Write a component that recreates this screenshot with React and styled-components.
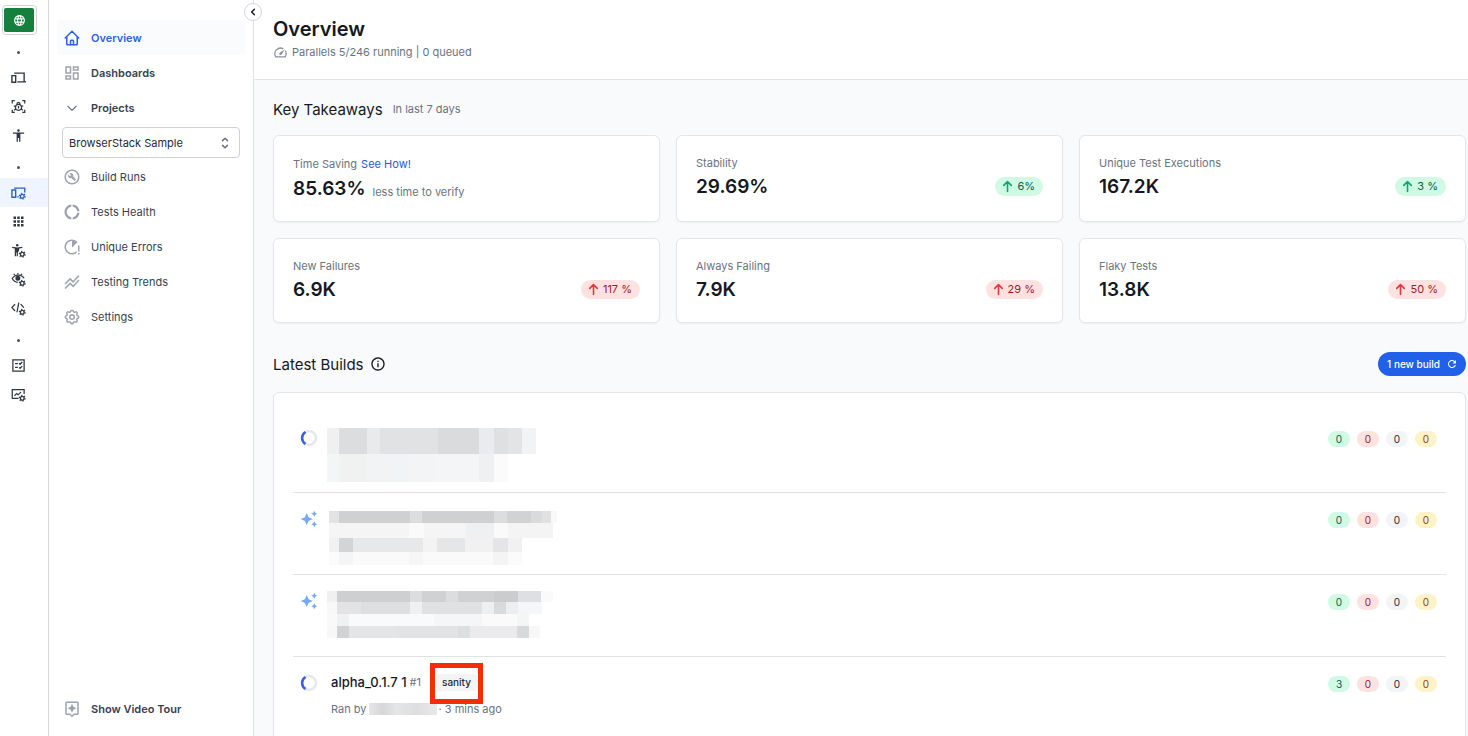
import React from "react";
import styled, { createGlobalStyle, css } from "styled-components";
import {
    MdAccessibility,
    MdApps,
    MdAutoAwesome,
    MdDonutLarge,
    MdInfoOutline,
    MdLanguage,
    MdOutlineAssistant,
    MdOutlineBuildCircle,
    MdOutlineDashboard,
    MdOutlineSpeed,
    MdRefresh,
    MdRunningWithErrors,
    MdStackedLineChart,
} from "react-icons/md";
import {
    HiChevronLeft,
    HiOutlineArrowUp,
    HiOutlineChevronDown,
    HiOutlineCog,
    HiOutlineHome,
    HiSelector,
} from "react-icons/hi";

const Gear = () => (
    <g fill="none" stroke="currentColor">
        <circle cx="18" cy="18" r="3" strokeWidth="2.2" />
        <circle cx="18" cy="18" r="4.7" strokeWidth="1.8" strokeDasharray="2 2.92" />
    </g>
);

const DevicesIcon = () => (
    <svg viewBox="0 0 24 24" fill="none" stroke="currentColor" strokeWidth="2.2">
        <path d="M5 5h16v13M10 19h14" />
        <path d="M1.500 9h6v10.500h-6z" />
    </svg>
);

const DevicesGearIcon = () => (
    <svg viewBox="0 0 24 24" fill="none" stroke="currentColor" strokeWidth="2.2">
        <path d="M5 5h17v7M10 19h2.500" />
        <path d="M1.500 8h6v11.500h-6z" />
        <Gear />
    </svg>
);

const ScanIcon = () => (
    <svg viewBox="0 0 24 24" fill="none" stroke="currentColor" strokeWidth="2">
        <path d="M2 7V2.500h4M18 2.500h4V7M22 17v4.500h-4M6 21.500H2V17" />
        <path d="M9.500 8.500c0-4 5-4 5 0M12 8.500c-6 0-7 9.500 0 9.500s6-9.500 0-9.500M12 11v4M4.500 11l3 1M19.500 11l-3 1M5 18l2.500-2M19 18l-2.500-2" />
    </svg>
);

const AccessGearIcon = () => (
    <svg viewBox="0 0 24 24" fill="currentColor">
        <circle cx="10" cy="3.500" r="2" />
        <path d="M2 6l8 1 8-1 .3 2-5.300.800V12l-2 3v6H9v-6H8v6H6V8.800L1.700 8z" />
        <Gear />
    </svg>
);

const EyeGearIcon = () => (
    <svg viewBox="0 0 24 24" fill="none" stroke="currentColor" strokeWidth="2">
        <path d="M21 10C17 3 6 3 2 10.500 4 14.500 7 16.500 11 16.500" />
        <circle cx="11" cy="10" r="3" fill="currentColor" />
        <path d="M6 5L4.500 3M11 4V1.500M16 5l1.500-2" />
        <Gear />
    </svg>
);

const CodeGearIcon = () => (
    <svg viewBox="0 0 24 24" fill="none" stroke="currentColor" strokeWidth="2">
        <path d="M6.500 5L1.500 10.500l5 5.500M15.500 5l5 5.500M12.500 2.500L9.500 18" />
        <Gear />
    </svg>
);

const ChecklistIcon = () => (
    <svg viewBox="0 0 24 24" fill="none" stroke="currentColor" strokeWidth="2">
        <path d="M3 3h18v18H3z" />
        <path d="M6.500 9H11M6.500 15H11M13 8.500l1.500 1.500L18 6.500M13 15l1.500 1.500L18 13" />
    </svg>
);

const ReportGearIcon = () => (
    <svg viewBox="0 0 24 24" fill="none" stroke="currentColor" strokeWidth="2">
        <path d="M12 18H2V4h19v7" />
        <path d="M5.500 14L9 10.500l2.500 2 4.500-4.500" strokeWidth="1.800" />
        <Gear />
    </svg>
);

const railGroups = [
    [
        { label: "Live", Icon: DevicesIcon },
        { label: "Bug Capture", Icon: ScanIcon },
        { label: "Accessibility", Icon: MdAccessibility },
    ],
    [
        { label: "Test Observability", Icon: DevicesGearIcon, active: true },
        { label: "All Products", Icon: MdApps },
        { label: "Accessibility Automation", Icon: AccessGearIcon },
        { label: "Visual Testing", Icon: EyeGearIcon },
        { label: "Code Automation", Icon: CodeGearIcon },
    ],
    [
        { label: "Test Management", Icon: ChecklistIcon },
        { label: "Reporting", Icon: ReportGearIcon },
    ],
];

const projectLinks = [
    { label: "Build Runs", Icon: MdOutlineBuildCircle },
    { label: "Tests Health", Icon: MdDonutLarge },
    { label: "Unique Errors", Icon: MdRunningWithErrors },
    { label: "Testing Trends", Icon: MdStackedLineChart },
    { label: "Settings", Icon: HiOutlineCog },
];

const takeaways = [
    { label: "Time Saving", link: "See How!", value: "85.63%", note: "less time to verify" },
    { label: "Stability", value: "29.69%", change: "6%", tone: "green" },
    { label: "Unique Test Executions", value: "167.2K", change: "3 %", tone: "green" },
    { label: "New Failures", value: "6.9K", change: "117 %", tone: "red" },
    { label: "Always Failing", value: "7.9K", change: "29 %", tone: "red" },
    { label: "Flaky Tests", value: "13.8K", change: "50 %", tone: "red" },
];

// each line is [height, [[cell width, shade], ...]]
const mosaics = [
    [
        [26, [[12, "#f0f0f1"], [28, "#dcdddf"], [13, "#e9eaeb"], [58, "#e1e2e3"], [41, "#dadbdd"], [15, "#eaebee"], [14, "#dfe0e1"], [14, "#e3e4e5"], [14, "#f2f3f4"]]],
        [28, [[12, "#f3f6f6"], [28, "#f0f2f2"], [26, "#f2f3f4"], [16, "#f1f4f6"], [25, "#f3f4f5"], [45, "#f3f5f7"], [15, "#eef0f1"], [14, "#fbfbfb"]]],
    ],
    [
        [12, [[10, "#e3e3e4"], [71, "#cfd0d2"], [12, "#dcdddf"], [72, "#cfd0d2"], [13, "#dcdddf"], [24, "#d1d2d4"], [11, "#d9dadb"], [9, "#e0e1e3"], [6, "#f9f9f9"]]],
        [15, [[80, "#f5f5f6"], [15, "#fafafa"], [42, "#f5f5f6"], [28, "#eff0f1"], [14, "#fafafa"], [45, "#f4f4f5"]]],
        [14, [[10, "#f1f1f2"], [14, "#d3d4d6"], [70, "#e7e8e9"], [14, "#f3f3f4"], [28, "#e5e6e8"], [28, "#f1f1f2"], [15, "#e5e5e7"], [14, "#f0f1f2"]]],
        [13, [[10, "#fbfbfb"], [14, "#f3f5f6"], [56, "#fafafa"], [14, "#f6f6f7"], [70, "#fafafa"], [15, "#f4f4f5"], [14, "#fbfbfb"]]],
    ],
    [
        [11, [[10, "#f0f0f1"], [73, "#cecfd1"], [12, "#dcdddf"], [24, "#d0d1d3"], [12, "#dcddde"], [36, "#d0d1d3"], [24, "#cbcccd"], [23, "#dedfe2"], [12, "#fafafa"]]],
        [12, [[10, "#f8f8f8"], [24, "#e3e3e5"], [49, "#dedfe1"], [12, "#eff0f2"], [60, "#e0e1e3"], [12, "#edeff1"], [12, "#d9dadc"], [12, "#eceef0"], [24, "#f5f6f7"]]],
        [12, [[10, "#f9f9f9"], [12, "#f0f1f2"], [85, "#f9fafb"], [48, "#f5f6f8"], [35, "#fafafa"], [12, "#f4f5f5"]]],
        [12, [[10, "#f8f8f8"], [12, "#d1d2d4"], [48, "#e4e5e6"], [61, "#e2e3e4"], [12, "#dddedf"], [47, "#ebebed"], [12, "#d8d9db"], [11, "#f7f7f7"]]],
    ],
];

const builds = [
    { status: "running", mosaic: mosaics[0], inset: 0, results: [0, 0, 0, 0] },
    { status: "analysed", mosaic: mosaics[1], inset: 2, results: [0, 0, 0, 0] },
    { status: "analysed", mosaic: mosaics[2], inset: 0, results: [0, 0, 0, 0] },
    { status: "running", name: "alpha_0.1.7 1", number: "#1", tag: "sanity", results: [3, 0, 0, 0] },
];

const resultTones = ["green", "red", "gray", "amber"];

const Takeaway = ({ item }) => (
    <Card>
        <CardLabel $tall={Boolean(item.link)}>
            {item.label}
            {item.link && <a href="#time-saving">{item.link}</a>}
        </CardLabel>
        <CardRow>
            <CardValue>{item.value}</CardValue>
            {item.note && <CardNote>{item.note}</CardNote>}
            {item.change && (
                <Change $tone={item.tone}>
                    <HiOutlineArrowUp />
                    {item.change}
                </Change>
            )}
        </CardRow>
    </Card>
);

const Mosaic = ({ lines, inset }) => (
    <MosaicBox $inset={inset}>
        {lines.map(([height, cells], i) => (
            <MosaicLine key={i} $height={height}>
                {cells.map(([width, shade], j) => (
                    <span key={j} style={{ width, backgroundColor: shade }} />
                ))}
            </MosaicLine>
        ))}
    </MosaicBox>
);

const Build = ({ build }) => (
    <BuildRow>
        <Status>
            {build.status === "running" ? (
                <svg viewBox="0 0 18 18" fill="none" strokeWidth="2.500">
                    <circle cx="9" cy="9" r="7" stroke="#e5e7eb" />
                    <path d="M5.500 3A7 7 0 0 0 5.500 15" stroke="#3b5fe0" />
                </svg>
            ) : (
                <MdAutoAwesome />
            )}
        </Status>
        {build.mosaic ? (
            <Mosaic lines={build.mosaic} inset={build.inset} />
        ) : (
            <BuildInfo>
                <BuildTitle>
                    <a href="#build">{build.name}</a>
                    <small>{build.number}</small>
                    <Tag>{build.tag}</Tag>
                </BuildTitle>
                <BuildMeta>
                    Ran by <Smudge /> · 3 mins ago
                </BuildMeta>
            </BuildInfo>
        )}
        <Results>
            {build.results.map((count, i) => (
                <Result key={resultTones[i]} $tone={resultTones[i]}>{count}</Result>
            ))}
        </Results>
    </BuildRow>
);

const App = () => {
    return (
        <Page>
            <GlobalStyle />
            <Rail>
                <Logo href="#home" aria-label="Home">
                    <span><MdLanguage /></span>
                </Logo>
                {railGroups.map((group, i) => (
                    <React.Fragment key={i}>
                        <Dot />
                        {group.map(({ label, Icon, active }) => (
                            <RailLink key={label} href="#product" aria-label={label} $active={active}>
                                <Icon />
                            </RailLink>
                        ))}
                    </React.Fragment>
                ))}
            </Rail>

            <Sidebar>
                <Collapse aria-label="Collapse sidebar"><HiChevronLeft /></Collapse>
                <NavLink href="#overview" $strong $active>
                    <HiOutlineHome />Overview
                </NavLink>
                <NavLink href="#dashboards" $strong>
                    <MdOutlineDashboard />Dashboards
                </NavLink>
                <ProjectsToggle $strong>
                    <HiOutlineChevronDown />Projects
                </ProjectsToggle>
                <SelectWrap>
                    <select aria-label="Project" defaultValue="sample">
                        <option value="sample">BrowserStack Sample</option>
                    </select>
                    <HiSelector />
                </SelectWrap>
                {projectLinks.map(({ label, Icon }) => (
                    <NavLink key={label} href="#project">
                        <Icon />{label}
                    </NavLink>
                ))}
                <SidebarFooter>
                    <NavButton $strong>
                        <MdOutlineAssistant />Show Video Tour
                    </NavButton>
                </SidebarFooter>
            </Sidebar>

            <Main>
                <Header>
                    <h1>Overview</h1>
                    <p><MdOutlineSpeed />Parallels 5/246 running | 0 queued</p>
                </Header>
                <Content>
                    <SectionHead>
                        <h2>Key Takeaways</h2>
                        <span>In last 7 days</span>
                    </SectionHead>
                    <Cards>
                        {takeaways.map((item) => <Takeaway key={item.label} item={item} />)}
                    </Cards>
                    <BuildsHead>
                        <h2>Latest Builds</h2>
                        <MdInfoOutline />
                        <NewBuild>1 new build<MdRefresh /></NewBuild>
                    </BuildsHead>
                    <BuildList>
                        {builds.map((build, i) => <Build key={i} build={build} />)}
                    </BuildList>
                </Content>
            </Main>
        </Page>
    );
}

export default App;

const tones = {
    green: css`background-color: #d1fae5; color: #065f46;`,
    red: css`background-color: #fee2e2; color: #991b1b;`,
    gray: css`background-color: #f3f4f6; color: #1f2937;`,
    amber: css`background-color: #fef3c7; color: #92400e;`,
};

const GlobalStyle = createGlobalStyle`
    * {
        box-sizing: border-box;
    }

    body {
        margin: 0;
        overflow: hidden;
        background-color: #fff;
        color: #15181f;
        font-family: Inter, "Liberation Sans", sans-serif;
        font-size: 11px;
    }

    a {
        color: inherit;
        text-decoration: none;
    }

    button, select {
        font: inherit;
        color: inherit;
        border: 0;
        background: none;
        cursor: pointer;
    }

    h1, h2, p {
        margin: 0;
    }

    svg {
        display: block;
        flex-shrink: 0;
    }
`;

const Page = styled.div`
    display: flex;
    height: 100vh;
`;

const Rail = styled.nav`
    display: flex;
    flex-direction: column;
    flex-shrink: 0;
    width: 49px;
    padding-top: 5px;
    border-right: 1px solid #d5d8dd;
`;

const Logo = styled.a`
    width: 35px;
    height: 30px;
    margin-left: 2px;
    padding: 2px 2px 2px 1px;
    border: 1px solid #cfd3d8;
    border-radius: 4px;

    >span {
        display: flex;
        align-items: center;
        justify-content: center;
        height: 100%;
        border-radius: 2px;
        background-color: #15803d;
        color: #fff;
        font-size: 13px;
    }
`;

const Dot = styled.div`
    display: flex;
    justify-content: center;
    height: 28px;
    padding: 16px 12px 0 0;

    &::before {
        content: "";
        width: 3px;
        height: 3px;
        border-radius: 50%;
        background-color: #4b5563;
    }
`;

const RailLink = styled.a`
    display: flex;
    align-items: center;
    justify-content: center;
    height: 29px;
    padding-right: 11px;
    background-color: ${({ $active }) => ($active ? "#eff4fe" : "transparent")};
    color: ${({ $active }) => ($active ? "#2563c9" : "#2f3743")};

    >svg {
        width: 15px;
        height: 15px;
    }
`;

const Sidebar = styled.aside`
    display: flex;
    flex-direction: column;
    flex-shrink: 0;
    position: relative;
    width: 205px;
    padding: 20px 8px 10px;
    border-right: 1px solid #dfe2e6;
`;

const Collapse = styled.button`
    display: flex;
    align-items: center;
    justify-content: center;
    position: absolute;
    top: 3px;
    right: -9px;
    width: 18px;
    height: 18px;
    padding: 0;
    border: 1px solid #d1d5db;
    border-radius: 50%;
    background-color: #fff;
    font-size: 14px;
`;

const navItem = css`
    display: flex;
    align-items: center;
    gap: 10px;
    width: 100%;
    height: 35px;
    padding: 0 6px;
    border-radius: 4px;
    background-color: ${({ $active }) => ($active ? "#fafbfd" : "transparent")};
    color: ${({ $active }) => ($active ? "#2f5fe0" : "#374151")};
    font-size: 11px;
    font-weight: ${({ $strong }) => ($strong ? 600 : 400)};

    >svg {
        width: 18px;
        height: 18px;
        color: ${({ $active }) => ($active ? "#2f5fe0" : "#9ca3af")};
    }
`;

const NavLink = styled.a`${navItem}`;

const NavButton = styled.button`${navItem}`;

const ProjectsToggle = styled(NavButton)`
    >svg {
        padding: 2px;
        color: #6b7280;
    }
`;

const SelectWrap = styled.div`
    display: flex;
    align-items: center;
    position: relative;
    height: 31px;
    margin: 2px 5px 1px;

    >select {
        appearance: none;
        width: 100%;
        height: 100%;
        padding: 0 24px 0 6px;
        border: 1px solid #cdd1d7;
        border-radius: 4px;
        color: #1f2937;
    }

    >svg {
        position: absolute;
        right: 7px;
        width: 16px;
        height: 16px;
        color: #6b7280;
        pointer-events: none;
    }
`;

const SidebarFooter = styled.div`
    margin-top: auto;
`;

const Main = styled.main`
    flex: 1;
    min-width: 0;
    display: flex;
    flex-direction: column;
`;

const Header = styled.header`
    padding: 17px 19px;
    border-bottom: 1px solid #e1e4e8;

    >h1 {
        font-size: 20px;
        line-height: 25px;
        font-weight: 600;
    }

    >p {
        display: flex;
        align-items: center;
        gap: 4px;
        line-height: 20px;
        color: #6b7280;
    }

    >p >svg {
        width: 15px;
        height: 15px;
        color: #8b919c;
    }
`;

const Content = styled.div`
    flex: 1;
    padding: 19px 2px 0 19px;
    background-color: #f9fafc;
`;

const SectionHead = styled.div`
    display: flex;
    align-items: center;
    gap: 10px;
    height: 20px;
    margin-bottom: 16px;
    color: #6b7280;

    >h2 {
        color: #15181f;
        font-size: 15px;
        font-weight: 400;
    }
`;

const Cards = styled.div`
    display: grid;
    grid-template-columns: repeat(3, 1fr);
    gap: 16px;
`;

const Card = styled.article`
    padding: 19px;
    border: 1px solid #e3e6ea;
    border-radius: 6px;
    background-color: #fff;
    box-shadow: 0 1px 2px rgba(0, 0, 0, 0.05);
`;

const CardLabel = styled.div`
    display: flex;
    gap: 4px;
    line-height: ${({ $tall }) => ($tall ? "18px" : "16px")};
    color: #6b7280;

    >a {
        color: #2559d6;
    }
`;

const CardRow = styled.div`
    display: flex;
    align-items: center;
    height: 29px;
    padding-top: 1px;
`;

const CardValue = styled.strong`
    font-size: 19px;
    font-weight: 600;
`;

const CardNote = styled.span`
    margin-left: 7px;
    padding-top: 8px;
    color: #6b7280;
`;

const Change = styled.span`
    display: flex;
    align-items: center;
    gap: 3px;
    height: 19px;
    margin-left: auto;
    padding: 0 8px 0 6px;
    border-radius: 10px;
    ${({ $tone }) => tones[$tone]}

    >svg {
        width: 13px;
        height: 13px;
        color: ${({ $tone }) => ($tone === "green" ? "#10a574" : "#e5393f")};
    }

    >svg path {
        stroke-width: 3;
    }
`;

const BuildsHead = styled(SectionHead)`
    gap: 6px;
    height: 24px;
    margin-top: 29px;

    >svg {
        width: 16px;
        height: 16px;
        color: #15181f;
    }
`;

const NewBuild = styled.button`
    display: flex;
    align-items: center;
    gap: 6px;
    height: 24px;
    margin-left: auto;
    padding: 0 8px 0 9px;
    border-radius: 12px;
    background-color: #2160e8;
    color: #fff;
    font-size: 10px;
    font-weight: 500;

    >svg {
        width: 12px;
        height: 12px;
    }
`;

const BuildList = styled.ul`
    margin: 0;
    padding: 19px 19px 0;
    border: 1px solid #e3e6ea;
    border-radius: 6px 6px 0 0;
    background-color: #fff;
    box-shadow: 0 1px 2px rgba(0, 0, 0, 0.05);
    list-style: none;
`;

const BuildRow = styled.li`
    display: flex;
    align-items: flex-start;
    height: 80px;
    padding: 16px 9px 0 7px;

    & + & {
        height: 82px;
        border-top: 1px solid #dfe2e5;
    }
`;

const Status = styled.span`
    width: 20px;
    color: #76a9f5;

    >svg {
        width: 18px;
        height: 20px;
    }
`;

const MosaicBox = styled.div`
    margin-left: ${({ $inset }) => 7 + $inset}px;
    padding-top: ${({ $inset }) => $inset}px;
`;

const MosaicLine = styled.div`
    display: flex;
    height: ${({ $height }) => $height}px;
`;

const BuildInfo = styled.div`
    padding-left: 11px;
    color: #6b7280;
`;

const BuildTitle = styled.div`
    display: flex;
    align-items: center;
    gap: 3px;
    height: 18px;

    >a {
        color: #15181f;
        font-size: 13px;
        font-weight: 500;
    }

    >small {
        font-size: 11px;
    }
`;

const Tag = styled.span`
    position: relative;
    margin-left: 12px;
    padding: 0 6px;
    border-radius: 4px;
    background-color: #f3f4f6;
    color: #1f2937;
    font-size: 10px;
    line-height: 17px;
    font-weight: 500;

    &::after {
        content: "";
        position: absolute;
        inset: -11px -6px -13px;
        border: 5px solid #f62c05;
    }
`;

const BuildMeta = styled.div`
    display: flex;
    align-items: center;
    gap: 2px;
    margin-top: 10px;
    line-height: 16px;
`;

const Smudge = styled.span`
    width: 68px;
    height: 12px;
    background: linear-gradient(90deg, #e6e6e8, #d6d7d9 20%, #e4e5e6 40%, #dddee0 70%, #e9e9eb);
`;

const Results = styled.div`
    display: flex;
    gap: 7px;
    margin-left: auto;
    padding-top: 3px;
`;

const Result = styled.span`
    width: 22px;
    border-radius: 8px;
    font-size: 10px;
    line-height: 16px;
    text-align: center;
    ${({ $tone }) => tones[$tone]}
`;
